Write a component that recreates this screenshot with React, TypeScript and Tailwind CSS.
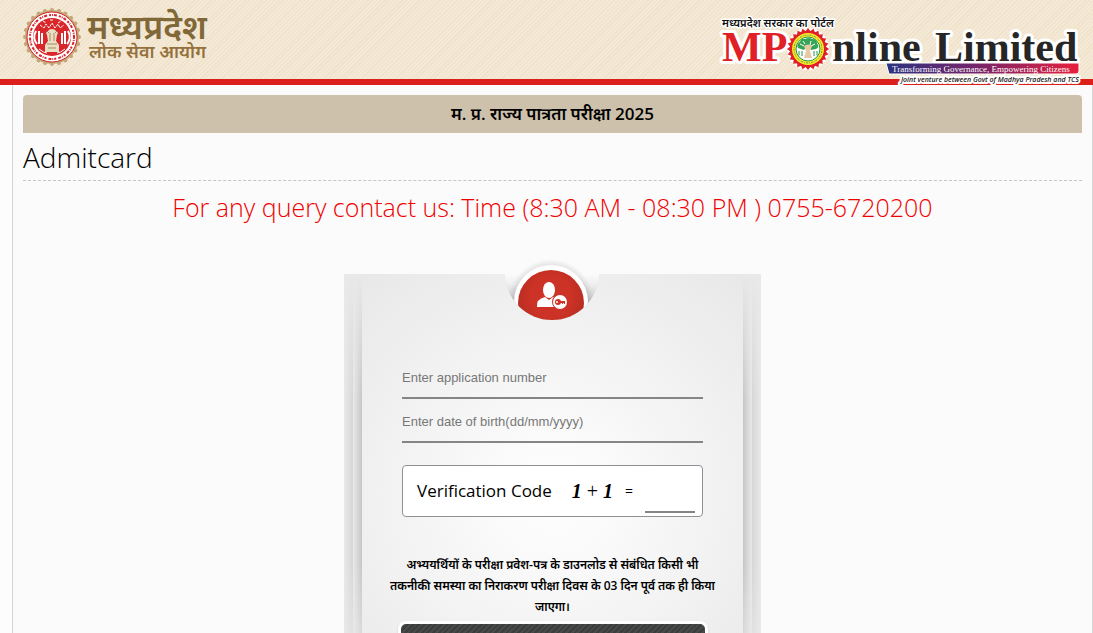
import { useState } from 'react';

const SEAL_POINTS = Array.from({ length: 24 }, (_, i) => (i * 360) / 24);

function CommissionLogo() {
  return (
    <svg width="200" height="72" viewBox="14 0 200 72" role="img" aria-label="मध्यप्रदेश लोक सेवा आयोग">
      {SEAL_POINTS.map((angle) => (
        <circle key={angle} cx="52" cy="10" r="2" fill="#c3a778" transform={`rotate(${angle} 52 37)`} />
      ))}
      <circle cx="52" cy="37" r="27" fill="#c3a778" />
      <circle cx="52" cy="37" r="25" fill="#fff" />
      <circle cx="52" cy="37" r="25" fill="none" stroke="#d9262b" strokeWidth="1" />
      <circle cx="52" cy="37" r="22" fill="none" stroke="#d9262b" strokeWidth="2" strokeDasharray="2 1 1 1 3 2" />
      <circle cx="52" cy="37" r="19" fill="#d9262b" />
      <g fill="none" stroke="#fff" strokeWidth="1">
        <path d="M40 25l4 3 2-4 3 4 3-5 3 5 3-4 2 4 4-3M43 21l3 2M58 23l3-2M50 20h4" strokeDasharray="3 1" />
        <path d="M36 31q-4 7 1 13M39 31v13M42 33v11M68 31q4 7-1 13M65 31v13M62 33v11" strokeWidth="2" />
        <path d="M39 49q5 4 8 4M65 49q-5 4-8 4" />
      </g>
      <path d="M47 35q-2-3 1-4 1-2 4-2t4 2q3 1 1 4l-1 6 3 4v7H45v-7l3-4z" fill="#e9dfc5" />
      <path d="M50 33v8M54 33v8M47 44h10M48 48h8M47 31l2 2M57 31l-2 2" fill="none" stroke="#a48b5c" strokeWidth="1" />
      <text x="87" y="39" fontSize="34" fontWeight="600" fill="#806838" fontFamily="'Noto Sans Devanagari', 'Noto Sans', sans-serif">
        मध्यप्रदेश
      </text>
      <text x="89" y="58" fontSize="18" fontWeight="600" fill="#94713c" fontFamily="'Noto Sans Devanagari', 'Noto Sans', sans-serif">
        लोक सेवा आयोग
      </text>
    </svg>
  );
}

function PortalLogo() {
  return (
    <svg width="372" height="74" viewBox="716 14 372 74" role="img" aria-label="MPOnline Limited">
      <defs>
        <linearGradient id="tagline" x1="0" x2="1">
          <stop offset="0" stopColor="#2b3280" />
          <stop offset="0.5" stopColor="#7c2468" />
          <stop offset="1" stopColor="#e8203c" />
        </linearGradient>
      </defs>
      <g stroke="#fff" strokeWidth="6" strokeLinejoin="round" style={{ paintOrder: 'stroke' }}>
        <g fontSize="42" fontWeight="700" fontFamily="'Liberation Serif', serif">
          <text x="722" y="61" fill="#e01f26">MP</text>
          <text x="832" y="61" fill="#262626">nline</text>
          <text x="935" y="61" fill="#262626">Limited</text>
        </g>
        <text x="722" y="27" fontSize="11" fontWeight="600" fill="#111" strokeWidth="3" fontFamily="'Noto Sans Devanagari', 'Noto Sans', sans-serif">
          मध्यप्रदेश सरकार का पोर्टल
        </text>
        <text x="901" y="82" fontSize="7" fontWeight="600" fontStyle="italic" fill="#222" strokeWidth="4" fontFamily="'Open Sans', sans-serif">
          Joint venture between Govt of Madhya Pradesh and TCS
        </text>
      </g>
      <circle cx="808" cy="49" r="21" fill="#fff" />
      {SEAL_POINTS.map((angle) => (
        <path key={angle} d="M805 32l3-4 3 4z" fill="#e01f26" transform={`rotate(${angle} 808 49)`} />
      ))}
      <circle cx="808" cy="49" r="18" fill="#e01f26" />
      <circle cx="808" cy="49" r="16" fill="#f7e92d" />
      <circle cx="808" cy="49" r="14" fill="none" stroke="#5f9a35" strokeWidth="1" strokeDasharray="1 1 2 1" />
      <circle cx="808" cy="49" r="12" fill="#fff" stroke="#23964a" strokeWidth="1" />
      <path d="M798 48q-2-4 2-6 1-4 5-3 4-2 7 0 5 0 5 4 3 4-1 6l-5 1-1-3h-4l-2 3z" fill="#36a457" />
      <path d="M800 44l4 2M803 41l2 3M811 41l-1 4M815 44l-4 2" stroke="#fff" strokeWidth="1" />
      <path d="M804 46q4-3 8 0l-2 5 2 7h-8l2-7z" fill="#e8c9a4" />
      <path d="M799 51v4M802 51v5M814 51v5M817 51v4" stroke="#23964a" strokeWidth="1" />
      <path d="M886 63h193v8q0 3-3 3H889z" fill="url(#tagline)" stroke="#fff" strokeWidth="1" />
      <text x="892" y="72" fontSize="9" fill="#fff" fontFamily="'Liberation Serif', serif">
        Transforming Governance, Empowering Citizens
      </text>
    </svg>
  );
}

function LoginBadge() {
  return (
    <svg width="104" height="66" viewBox="500 258 104 66" aria-hidden="true">
      <defs>
        <clipPath id="bowl">
          <circle cx="552" cy="273" r="47" />
        </clipPath>
        <linearGradient id="bowlShade" x1="0" y1="0" x2="0" y2="1">
          <stop offset="0" stopColor="#fbfbfb" />
          <stop offset="0.2" stopColor="#efefef" />
          <stop offset="0.7" stopColor="#b5b5b5" />
        </linearGradient>
        <radialGradient id="halo">
          <stop offset="0.84" stopColor="#000" stopOpacity="0.1" />
          <stop offset="1" stopColor="#000" stopOpacity="0" />
        </radialGradient>
        <radialGradient id="badgeRed" cy="0.4" r="0.6">
          <stop offset="0.5" stopColor="#cc3326" />
          <stop offset="1" stopColor="#b22b20" />
        </radialGradient>
      </defs>
      <g clipPath="url(#bowl)">
        <rect x="500" y="274" width="104" height="50" fill="url(#bowlShade)" />
        <circle cx="551" cy="302" r="43" fill="url(#halo)" />
        <circle cx="551" cy="302" r="37" fill="#fff" />
        <circle cx="551" cy="303" r="33" fill="url(#badgeRed)" />
      </g>
      <ellipse cx="549" cy="290" rx="6" ry="8" fill="#fff" />
      <path d="M537 307q-1-8 8-10l4 3 4-3q8 1 8 10z" fill="#fff" />
      <circle cx="560" cy="302" r="8" fill="#cc3326" />
      <circle cx="560" cy="302" r="7" fill="#fff" />
      <circle cx="558" cy="302" r="3" fill="#cc3326" />
      <circle cx="557" cy="302" r="1" fill="#fff" />
      <path d="M560 301h5v3h-1v-1h-1v1h-1v-1h-2z" fill="#cc3326" />
    </svg>
  );
}

function AdmitCardForm() {
  const [applicationNo, setApplicationNo] = useState('');
  const [dob, setDob] = useState('');
  const [code, setCode] = useState('');

  const field =
    "block h-8 w-full border-b-2 border-[#858585] bg-transparent pb-[10px] font-['Liberation_Sans',sans-serif] text-[13px] text-black outline-none placeholder:text-[#777]";

  return (
    <form
      className="relative w-full max-w-[417px] bg-[#e9e9e9] px-[18px]"
      onSubmit={(e) => e.preventDefault()}
    >
      {/* stacked paper edges on both sides */}
      <div className="pointer-events-none absolute inset-y-0 left-0 w-[9px] bg-linear-to-r from-[#e9e9e9] to-[#d6d6d6] mask-t-from-70% mask-b-from-70%" />
      <div className="pointer-events-none absolute inset-y-0 left-[9px] w-[9px] bg-linear-to-r from-[#e9e9e9] to-[#c6c6c6] mask-t-from-70% mask-b-from-70%" />
      <div className="pointer-events-none absolute inset-y-0 right-0 w-[9px] bg-linear-to-l from-[#e9e9e9] to-[#d6d6d6] mask-t-from-70% mask-b-from-70%" />
      <div className="pointer-events-none absolute inset-y-0 right-[9px] w-[9px] bg-linear-to-l from-[#e9e9e9] to-[#c6c6c6] mask-t-from-70% mask-b-from-70%" />
      <div className="absolute -top-4 left-39 z-10">
        <LoginBadge />
      </div>
      <div className="relative bg-[radial-gradient(circle_at_50%_220px,#ffffff,#e8e8e8_290px)] px-5 pt-[93px] pb-8">
        <div className="mx-5 flex flex-col gap-3">
          <input
            aria-label="Application number"
            className={field}
            placeholder="Enter application number"
            value={applicationNo}
            onChange={(e) => setApplicationNo(e.target.value)}
          />
          <input
            aria-label="Date of birth"
            className={field}
            placeholder="Enter date of birth(dd/mm/yyyy)"
            value={dob}
            onChange={(e) => setDob(e.target.value)}
          />
        </div>
        <div className="mx-5 mt-[22px] flex h-[52px] items-center rounded border border-[#8e9095] bg-white pr-[7px] pl-[14px]">
          <label htmlFor="code" className="flex flex-1 items-center text-[17px]">
            <span>Verification Code</span>
            <span className="ml-5 font-['Liberation_Serif',serif] text-xl">
              <b className="italic">1</b> + <b className="italic">1</b>
            </span>
            <span className="ml-3 text-sm">=</span>
          </label>
          <input
            id="code"
            className="mt-2 h-9 w-[50px] border-b-2 border-[#858585] bg-transparent text-sm outline-none"
            value={code}
            onChange={(e) => setCode(e.target.value)}
          />
        </div>
        <p className="mt-[37px] text-center text-xs leading-[21px] font-semibold">
          अभ्ययर्थियों के परीक्षा प्रवेश-पत्र के डाउनलोड से संबंधित किसी भी
          <br />
          तकनीकी समस्या का निराकरण परीक्षा दिवस के 03 दिन पूर्व तक ही किया
          <br />
          जाएगा।
        </p>
        <button
          type="submit"
          aria-label="Submit"
          className="mx-4 mt-1 block h-10 w-[310px] rounded-lg border-[3px] border-white bg-[#404241] bg-[repeating-linear-gradient(135deg,#3b3d3c_0_2px,#484a49_2px_4px)] shadow"
        />
      </div>
    </form>
  );
}

export default function App() {
  return (
    <div className="h-screen overflow-hidden bg-[#fdfdfd] font-['Open_Sans','Noto_Sans_Devanagari',sans-serif] text-black">
      <header className="flex h-[85px] items-start justify-between border-b-[6px] border-[#dc1f1a] bg-[#f2e5cf] bg-[repeating-linear-gradient(135deg,#f4e9d6_0_2px,#f0e1c9_2px_3px)] pr-[5px] pl-[14px]">
        <CommissionLogo />
        <div className="mt-[14px]">
          <PortalLogo />
        </div>
      </header>
      <main className="ml-3 min-h-full border-x border-[#d6d6d6] bg-[#fbfbfb] px-[10px] pt-[10px]">
        <h1 className="flex h-[38px] items-center justify-center rounded-t bg-[#cdc1ac] text-[17px] font-semibold">
          म. प्र. राज्य पात्रता परीक्षा 2025
        </h1>
        <h2 className="border-b border-dashed border-[#c5c5c5] pt-1 pb-[3px] text-[28px] leading-10 font-light">Admitcard</h2>
        <p className="mt-[6px] text-center text-[25px] leading-10 font-light text-[#f00000]">
          For any query contact us: Time (8:30 AM - 08:30 PM ) 0755-6720200
        </p>
        <div className="mt-[47px] flex justify-center">
          <AdmitCardForm />
        </div>
      </main>
    </div>
  );
}
